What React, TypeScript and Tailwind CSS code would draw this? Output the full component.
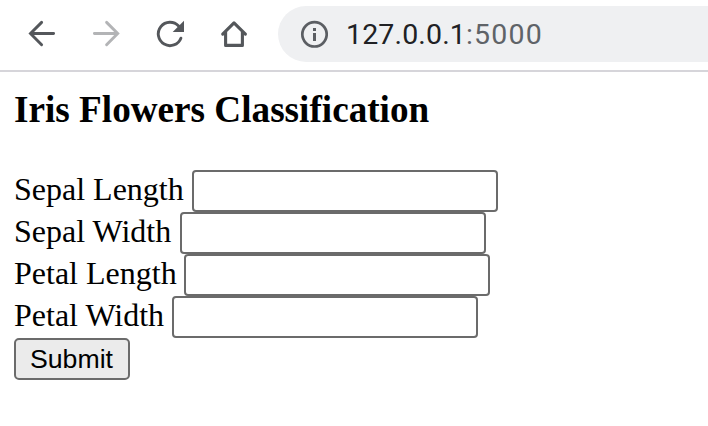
const fields = [
  { name: 'Sepal Length', labelClass: 'w-[178px]' },
  { name: 'Sepal Width', labelClass: 'w-[166px]' },
  { name: 'Petal Length', labelClass: 'w-[170px]' },
  { name: 'Petal Width', labelClass: 'w-[158px]' },
];

function Toolbar() {
  return (
    <header className="flex h-[72px] items-start border-b-2 border-[#d6d5da] bg-white pt-1.5">
      <svg className="h-14 w-[278px] shrink-0" viewBox="0 6 278 56" fill="none" strokeWidth="2.9" strokeLinecap="round">
        <path d="M53.6 33.5H31M41.6 22.4L30.5 33.5l11.1 11.2" stroke="#54575b" />
        <path d="M94.4 33.5H117M106.6 22.4l11.1 11.1-11.1 11.2" stroke="#b3b4b6" />
        <path d="M178.6 26A11.7 11.7 0 1 0 180.9 38.2" stroke="#54575b" />
        <path d="M184 20.8V32h-11.3z" fill="#54575b" />
        <path
          d="M222.7 34.2L234 22.9 245.4 34.2M225.6 31.8v13.6h16.8V31.8"
          stroke="#54575b"
          strokeWidth="3.1"
          strokeLinejoin="round"
        />
      </svg>
      <div className="flex h-14 flex-1 items-center rounded-l-full bg-[#eff0f2] pl-[22px]">
        <svg className="h-7 w-7 shrink-0" viewBox="0 0 28 28" fill="none">
          <circle cx="14.5" cy="14.3" r="12.2" stroke="#5b5e63" strokeWidth="2.7" />
          <path d="M13 8h3v3h-3zM13 13h3v8h-3z" fill="#5b5e63" />
        </svg>
        <span className="ml-[18px] pt-px font-['Roboto',sans-serif] text-[28.5px] leading-[55px] tracking-[0.15px] whitespace-nowrap text-[#202124]">
          127.0.0.1<span className="tracking-[1.2px] text-[#5f6368]">:5000</span>
        </span>
      </div>
    </header>
  );
}

export default function App() {
  return (
    <div className="h-[426px] w-full overflow-hidden bg-white font-['Liberation_Serif',serif] text-black">
      <Toolbar />
      <main className="px-3.5 pt-[17px]">
        <h3 className="mb-[39px] h-[42px] text-[37.2px] leading-[42px] font-bold whitespace-nowrap">
          Iris Flowers Classification
        </h3>
        <form onSubmit={(event) => event.preventDefault()}>
          {fields.map((field) => (
            <label key={field.name} className="flex h-[42px] items-start text-[32px] leading-[38px]">
              <span className={`${field.labelClass} shrink-0 whitespace-nowrap`}>{field.name}</span>
              <input
                type="text"
                className="h-[42px] w-[306px] rounded-[4px] border-2 border-[#6b6b6b] bg-white px-1 font-['Liberation_Sans',sans-serif] text-[26.67px] outline-none"
              />
            </label>
          ))}
          <button
            type="submit"
            className="block h-[42px] w-[116px] rounded-[5px] border-2 border-[#6b6b6b] bg-[#ebebeb] pr-px text-center font-['Liberation_Sans',sans-serif] text-[26.67px] leading-[38px]"
          >
            Submit
          </button>
        </form>
      </main>
    </div>
  );
}
